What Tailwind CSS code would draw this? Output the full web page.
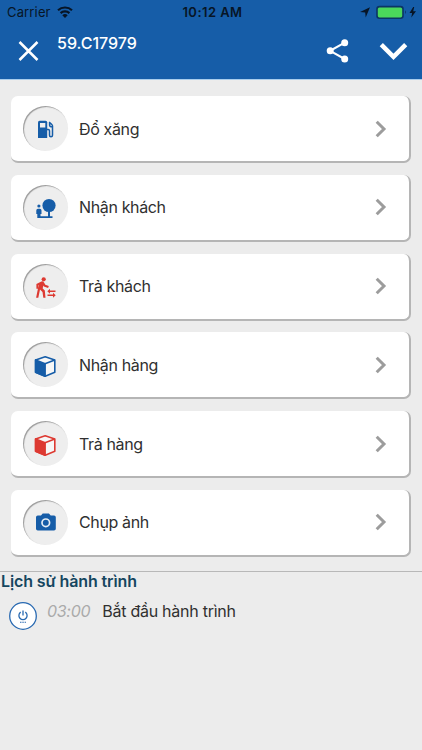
<!DOCTYPE html>
<html lang="vi">
<head>
<meta charset="utf-8">
<title>59.C17979</title>
<script src="https://cdn.jsdelivr.net/npm/@tailwindcss/browser@4"></script>
</head>
<body class="w-[422px] h-[750px] overflow-hidden bg-[#ececec] font-['Inter','Liberation_Sans',sans-serif] text-[#303030]">
<header class="h-[80px] bg-[#165da8] border-b border-[#a9cdec]">
  <div class="h-6 grid grid-cols-3 items-center text-[13px] leading-none text-[#071526]">
    <div class="flex items-center gap-[6.500px] pl-[7px]">
      <span class="tracking-[0.150px]">Carrier</span>
      <svg width="16" height="12" viewBox="0 0 16 12" fill="none" stroke="#071526" stroke-width="2.2"><path d="M1 4.3a10.2 10.2 0 0 1 14 0M3.6 7.1a6.4 6.4 0 0 1 8.8 0"/><path d="M8 12 5.3 9.3a3.9 3.9 0 0 1 5.4 0z" fill="#071526" stroke="none"/></svg>
    </div>
    <div class="text-center font-semibold tracking-[0.450px] pl-[3px] whitespace-nowrap">10:12 AM</div>
    <div class="flex items-center justify-end pr-[5px]">
      <svg width="58" height="14" viewBox="0 0 58 14"><path d="M1 7.1 11 2.3 6.7 12.5 6.2 7.4z" fill="#071526"/><rect x="18" y="1.6" width="26" height="11.600" rx="2.5" fill="#4bd75b" stroke="#0b3564" stroke-width="1.6"/><path d="M46 5.3q1.9 1.8 0 3.8z" fill="#0b3564"/><path d="M54.2 2 50.5 8h2.6l-.8 4.5L57 6.3h-2.8l1-4.3z" fill="#071526"/></svg>
    </div>
  </div>
  <div class="h-[54px] flex items-start text-white">
    <svg class="ml-[18px] mt-4" width="21" height="21" viewBox="0 0 21 21" fill="none" stroke="#fff" stroke-width="2.5"><path d="m1.500 2 18 18M19.500 2l-18 18"/></svg>
    <h1 class="ml-[18px] mt-[9px] text-[16px] leading-5 font-medium">59.C17979</h1>
    <svg class="ml-auto mt-[14px]" width="24" height="26" viewBox="0 0 24 26"><path d="M18.700 4.700 4.100 12.800l14.600 8.200" fill="none" stroke="#fff" stroke-width="2.100"/><g fill="#fff"><circle cx="18.700" cy="4.700" r="3.500"/><circle cx="4.200" cy="12.800" r="3.500"/><circle cx="18.700" cy="21" r="3.500"/></g></svg>
    <svg class="ml-[29px] mr-[14px] mt-[18px]" width="29" height="19" viewBox="0 0 29 19" fill="none" stroke="#fff" stroke-width="4.500"><path d="m2.300 2.700 12.200 12.200L26.700 2.700"/></svg>
  </div>
</header>

<main>
  <ul class="flex flex-col gap-[11.750px] pt-4 px-[11px] h-[491px]">
    <li class="h-[67px] shrink-0 flex items-center rounded-[7px] bg-white border-r-[2.500px] border-b-[2.500px] border-[#b5b5b5] pl-3 pr-[22px]">
      <span class="size-[45px] rounded-full bg-[#eeeeee] shadow-[inset_1px_1px_1px_#999999]"><svg width="45" height="45" viewBox="0 0 45 45"><path d="M15 16.300q0-1.600 1.600-1.600h6q1.600 0 1.600 1.600V32H15z" fill="#165da8"/><path d="M17 17h5.300v4.500H17z" fill="#eee"/><path d="M24 23.500h1.200q1.300 0 1.300 1.300v4.400q0 1.500 1.500 1.500t1.500-1.500V20q0-.9-.7-1.500l-2.700-2.500M26.600 17v2.400q.3 1.600 2.900 1.600" fill="none" stroke="#165da8" stroke-width="1.500"/></svg></span>
      <span class="ml-[11px] text-[16px] tracking-[-0.360px]">Đổ xăng</span>
      <svg class="ml-auto" width="12" height="18" viewBox="0 0 12 18" fill="none" stroke="#9c9c9c" stroke-width="3"><path d="m1.700 1.700 7.300 7.300-7.300 7.300"/></svg>
    </li>
    <li class="h-[67px] shrink-0 flex items-center rounded-[7px] bg-white border-r-[2.500px] border-b-[2.500px] border-[#b5b5b5] pl-3 pr-[22px]">
      <span class="size-[45px] rounded-full bg-[#eeeeee] shadow-[inset_1px_1px_1px_#999999]"><svg width="45" height="45" viewBox="0 0 45 45" fill="#165da8"><circle cx="26" cy="20.500" r="6.600"/><circle cx="15.900" cy="21" r="1.600"/><path d="M25 25h2v6.200h2.500V33H14.300v-4h-1v-3.600q0-1.600 1.600-1.600h2q1.600 0 1.600 1.600V29h-1v2.200H25z"/></svg></span>
      <span class="ml-[11px] text-[16px] tracking-[-0.360px]">Nhận khách</span>
      <svg class="ml-auto" width="12" height="18" viewBox="0 0 12 18" fill="none" stroke="#9c9c9c" stroke-width="3"><path d="m1.700 1.700 7.300 7.300-7.300 7.300"/></svg>
    </li>
    <li class="h-[67px] shrink-0 flex items-center rounded-[7px] bg-white border-r-[2.500px] border-b-[2.500px] border-[#b5b5b5] pl-3 pr-[22px]">
      <span class="size-[45px] rounded-full bg-[#eeeeee] shadow-[inset_1px_1px_1px_#999999]"><svg width="45" height="45" viewBox="0 0 45 45" fill="#dd3a32"><circle cx="20.700" cy="15.300" r="2.100"/><path d="m13.400 20 5-2.500q1.600-.5 2.600.9l1.300 2.300 3.500 1.400-.7 1.800-4.200-1.500-.6-1-.6 3 2.100 2.200.7 7.100h-2.200l-.8-5.700-2.500-2.500-1.700 8.200h-2.200l2.600-12.600-.6.300v3.300h-1.700z"/><path d="M24.300 27.300 27 24.800v1.600h5.500V28H27v1.700zM32.700 31.300 30 33.800v-1.700h-5.500v-1.600H30v-1.700z"/></svg></span>
      <span class="ml-[11px] text-[16px] tracking-[-0.360px]">Trả khách</span>
      <svg class="ml-auto" width="12" height="18" viewBox="0 0 12 18" fill="none" stroke="#9c9c9c" stroke-width="3"><path d="m1.700 1.700 7.300 7.300-7.300 7.300"/></svg>
    </li>
    <li class="h-[67px] shrink-0 flex items-center rounded-[7px] bg-white border-r-[2.500px] border-b-[2.500px] border-[#b5b5b5] pl-3 pr-[22px]">
      <span class="size-[45px] rounded-full bg-[#eeeeee] shadow-[inset_1px_1px_1px_#999999]"><svg width="45" height="45" viewBox="0 0 45 45" stroke="#165da8" stroke-width="1.600" stroke-linejoin="round"><path d="m22.200 14.700 9.600 3.200v12.400l-9.600 3.900-9.600-3.900V17.900z" fill="#f7f7f7"/><path d="m12.600 17.900 9.500 3.900v12.400l-9.500-3.900z" fill="#165da8"/><path d="m22 21.800 9.800-3.900" fill="none"/></svg></span>
      <span class="ml-[11px] text-[16px] tracking-[-0.360px]">Nhận hàng</span>
      <svg class="ml-auto" width="12" height="18" viewBox="0 0 12 18" fill="none" stroke="#9c9c9c" stroke-width="3"><path d="m1.700 1.700 7.300 7.300-7.300 7.300"/></svg>
    </li>
    <li class="h-[67px] shrink-0 flex items-center rounded-[7px] bg-white border-r-[2.500px] border-b-[2.500px] border-[#b5b5b5] pl-3 pr-[22px]">
      <span class="size-[45px] rounded-full bg-[#eeeeee] shadow-[inset_1px_1px_1px_#999999]"><svg width="45" height="45" viewBox="0 0 45 45" stroke="#dd3a32" stroke-width="1.600" stroke-linejoin="round"><path d="m22.200 14.700 9.600 3.200v12.400l-9.600 3.900-9.600-3.900V17.900z" fill="#f7f7f7"/><path d="m12.600 17.900 9.500 3.900v12.400l-9.500-3.900z" fill="#dd3a32"/><path d="m22 21.800 9.800-3.900" fill="none"/></svg></span>
      <span class="ml-[11px] text-[16px] tracking-[-0.360px]">Trả hàng</span>
      <svg class="ml-auto" width="12" height="18" viewBox="0 0 12 18" fill="none" stroke="#9c9c9c" stroke-width="3"><path d="m1.700 1.700 7.300 7.300-7.300 7.300"/></svg>
    </li>
    <li class="h-[67px] shrink-0 flex items-center rounded-[7px] bg-white border-r-[2.500px] border-b-[2.500px] border-[#b5b5b5] pl-3 pr-[22px]">
      <span class="size-[45px] rounded-full bg-[#eeeeee] shadow-[inset_1px_1px_1px_#999999]"><svg width="45" height="45" viewBox="0 0 45 45"><path d="M19.700 13.500h6.200l1.800 1.900H31q1.800 0 1.800 1.800v11.500q0 1.800-1.800 1.800H14.800q-1.800 0-1.800-1.800V17.200q0-1.800 1.800-1.800H18z" fill="#165da8"/><circle cx="22.800" cy="22.800" r="3.800" fill="none" stroke="#e5edf5" stroke-width="1.700"/></svg></span>
      <span class="ml-[11px] text-[16px] tracking-[-0.360px]">Chụp ảnh</span>
      <svg class="ml-auto" width="12" height="18" viewBox="0 0 12 18" fill="none" stroke="#9c9c9c" stroke-width="3"><path d="m1.700 1.700 7.300 7.300-7.300 7.300"/></svg>
    </li>
  </ul>
  <section class="border-t border-[#b8b8b8]">
    <h2 class="pl-px text-[16px] leading-[19px] font-semibold tracking-[-0.120px] text-[#15465f]">Lịch sử hành trình</h2>
    <div class="flex items-start mt-[10px] pl-[9px]">
      <svg width="28" height="30" viewBox="0 0 28 30" fill="none" stroke="#2869b1"><circle cx="14" cy="15" r="13.300" fill="#fff" stroke-width="1.300"/><path d="M14 9.500v5M11.700 11.100a4.100 4.100 0 1 0 4.600 0" stroke-width="1.300"/><path d="M11 21.300h1.500m.8 0h1.500m.8 0H17" stroke-width="1.100"/></svg>
      <time class="ml-[10px] text-[16px] leading-[21px] italic tracking-[-0.300px] text-[#aaaaaa]">03:00</time>
      <span class="ml-3 text-[16px] leading-[21px] tracking-[-0.260px]">Bắt đầu hành trình</span>
    </div>
  </section>
</main>
</body>
</html>
